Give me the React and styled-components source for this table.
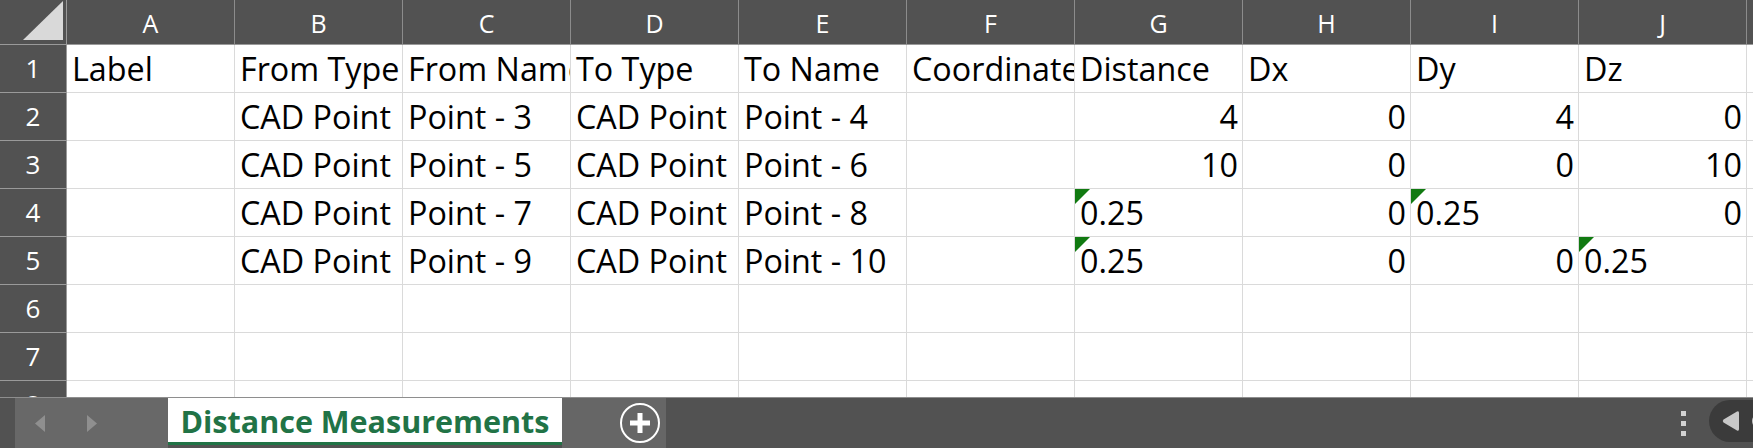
import styled, { createGlobalStyle } from 'styled-components';

const GlobalStyle = createGlobalStyle`
  html, body {
    margin: 0;
    padding: 0;
    background: #ffffff;
  }

  body {
    font-family: "Open Sans", "Noto Sans", sans-serif;
  }

  *, *::before, *::after {
    box-sizing: border-box;
  }
`;

const COLUMNS = ['A', 'B', 'C', 'D', 'E', 'F', 'G', 'H', 'I', 'J', 'K'];

// value, align ('left' | 'right'), flagged (green error marker)
const ROWS = [
  [['Label'], ['From Type'], ['From Name'], ['To Type'], ['To Name'], ['Coordinate System'], ['Distance'], ['Dx'], ['Dy'], ['Dz']],
  [[''], ['CAD Point'], ['Point - 3'], ['CAD Point'], ['Point - 4'], [''], ['4', 'right'], ['0', 'right'], ['4', 'right'], ['0', 'right']],
  [[''], ['CAD Point'], ['Point - 5'], ['CAD Point'], ['Point - 6'], [''], ['10', 'right'], ['0', 'right'], ['0', 'right'], ['10', 'right']],
  [[''], ['CAD Point'], ['Point - 7'], ['CAD Point'], ['Point - 8'], [''], ['0.25', 'left', true], ['0', 'right'], ['0.25', 'left', true], ['0', 'right']],
  [[''], ['CAD Point'], ['Point - 9'], ['CAD Point'], ['Point - 10'], [''], ['0.25', 'left', true], ['0', 'right'], ['0', 'right'], ['0.25', 'left', true]],
  [],
  [],
  [],
];

const StyledWorkbook = styled.div`
  display: flex;
  flex-direction: column;
  width: 1753px;
  height: 448px;
  overflow: hidden;
`;

const StyledSheet = styled.div`
  flex: 1;
  min-height: 0;
  overflow: hidden;
`;

const StyledRow = styled.div`
  display: grid;
  grid-template-columns: 67px repeat(11, 168px);
  height: ${({ $header }) => ($header ? '45px' : '48px')};
`;

const StyledCorner = styled.div`
  display: flex;
  align-items: flex-end;
  justify-content: flex-end;
  padding: 0 3px 4px 0;
  background-color: #525252;
  border-right: 1px solid #9a9a9a;
  border-bottom: 1px solid #9a9a9a;

  svg {
    display: block;
  }
`;

const StyledColumnHeader = styled.div`
  background-color: #525252;
  color: #ffffff;
  font-size: 25px;
  line-height: 46px;
  text-align: center;
  border-right: 1px solid #8c8c8c;
  border-bottom: 1px solid #9a9a9a;
  overflow: hidden;
`;

const StyledRowHeader = styled.div`
  background-color: #525252;
  color: #ffffff;
  font-size: 26px;
  line-height: 47px;
  text-align: center;
  border-right: 1px solid #9a9a9a;
  border-bottom: 1px solid #9a9a9a;
  overflow: hidden;
`;

const StyledCell = styled.div`
  position: relative;
  padding: 0 4px 0 5px;
  color: #000000;
  font-size: 32.3px;
  line-height: 46px;
  text-align: ${({ $align }) => $align};
  white-space: nowrap;
  overflow: hidden;
  border-right: 1px solid #dadada;
  border-bottom: 1px solid #dadada;

  &::before {
    content: '';
    display: ${({ $flagged }) => ($flagged ? 'block' : 'none')};
    position: absolute;
    top: 0;
    left: 0;
    border-top: 15px solid #117a11;
    border-right: 15px solid transparent;
  }
`;

const StyledTabBar = styled.div`
  display: flex;
  flex: none;
  height: 51px;
  padding-left: 15px;
  background-color: #525252;
  border-top: 1px solid #8e8e8e;
`;

const StyledNav = styled.div`
  display: flex;
  align-items: center;
  gap: 42px;
  width: 153px;
  padding-left: 20px;
  background-color: #686868;

  svg {
    display: block;
  }
`;

const StyledTab = styled.div`
  display: flex;
  align-items: center;
  justify-content: center;
  width: 394px;
  height: 47px;
  padding-top: 1px;
  background-color: #ffffff;
  color: #217346;
  font-size: 30.5px;
  font-weight: 700;
  border-bottom: 3px solid #217346;
`;

const StyledAddArea = styled.div`
  display: flex;
  align-items: center;
  width: 104px;
  padding-left: 57px;
  background-color: #666666;

  svg {
    display: block;
  }
`;

const StyledSpacer = styled.div`
  flex: 1;
`;

const StyledDots = styled.div`
  display: flex;
  flex-direction: column;
  justify-content: center;
  gap: 5px;
  margin-right: 23px;
`;

const StyledDot = styled.span`
  display: block;
  width: 5px;
  height: 5px;
  background-color: #d2d2d2;
`;

const StyledScrollPill = styled.div`
  display: flex;
  align-items: center;
  flex: none;
  gap: 13px;
  width: 70px;
  height: 42px;
  margin-top: 2px;
  margin-right: -26px;
  padding-left: 13px;
  background-color: #3b3b3b;
  border-radius: 21px 0 0 21px;

  svg {
    display: block;
  }
`;

const StyledPillKnob = styled.span`
  display: block;
  flex: none;
  width: 14px;
  height: 14px;
  border-radius: 50%;
  background-color: #c8c8c8;
`;

function Arrow({ dir }) {
  const points = dir === 'left' ? '10,0 10,17 0,8.5' : '0,0 0,17 10,8.5';
  return (
    <svg width="10" height="17" viewBox="0 0 10 17">
      <polygon points={points} fill="#8f8f8f" />
    </svg>
  );
}

function App() {
  return (
    <StyledWorkbook>
      <GlobalStyle />
      <StyledSheet>
        <StyledRow $header>
          <StyledCorner>
            <svg width="40" height="39" viewBox="0 0 40 39">
              <polygon points="40,0 40,39 0,39" fill="#d9d9d9" />
            </svg>
          </StyledCorner>
          {COLUMNS.map((letter) => (
            <StyledColumnHeader key={letter}>{letter}</StyledColumnHeader>
          ))}
        </StyledRow>

        {ROWS.map((row, rowIndex) => (
          <StyledRow key={rowIndex}>
            <StyledRowHeader>{rowIndex + 1}</StyledRowHeader>
            {COLUMNS.map((letter, colIndex) => {
              const [value = '', align = 'left', flagged = false] = row[colIndex] || [];
              return (
                <StyledCell key={letter} $align={align} $flagged={flagged}>
                  {value}
                </StyledCell>
              );
            })}
          </StyledRow>
        ))}
      </StyledSheet>

      <StyledTabBar>
        <StyledNav>
          <Arrow dir="left" />
          <Arrow dir="right" />
        </StyledNav>
        <StyledTab>Distance Measurements</StyledTab>
        <StyledAddArea>
          <svg width="42" height="42" viewBox="0 0 42 42">
            <circle cx="21" cy="21" r="19" fill="none" stroke="#ffffff" strokeWidth="2" />
            <rect x="11" y="18.5" width="20" height="5" fill="#ffffff" />
            <rect x="18.5" y="11" width="5" height="20" fill="#ffffff" />
          </svg>
        </StyledAddArea>
        <StyledSpacer />
        <StyledDots>
          <StyledDot />
          <StyledDot />
          <StyledDot />
        </StyledDots>
        <StyledScrollPill>
          <svg width="17" height="22" viewBox="0 0 17 22">
            <path d="M15 1.5 Q17 0.5 17 3 L17 19 Q17 21.5 15 20.5 L1.5 12.5 Q0 11 1.5 9.5 Z" fill="#c8c8c8" />
          </svg>
          <StyledPillKnob />
        </StyledScrollPill>
      </StyledTabBar>
    </StyledWorkbook>
  );
}

export default App;
